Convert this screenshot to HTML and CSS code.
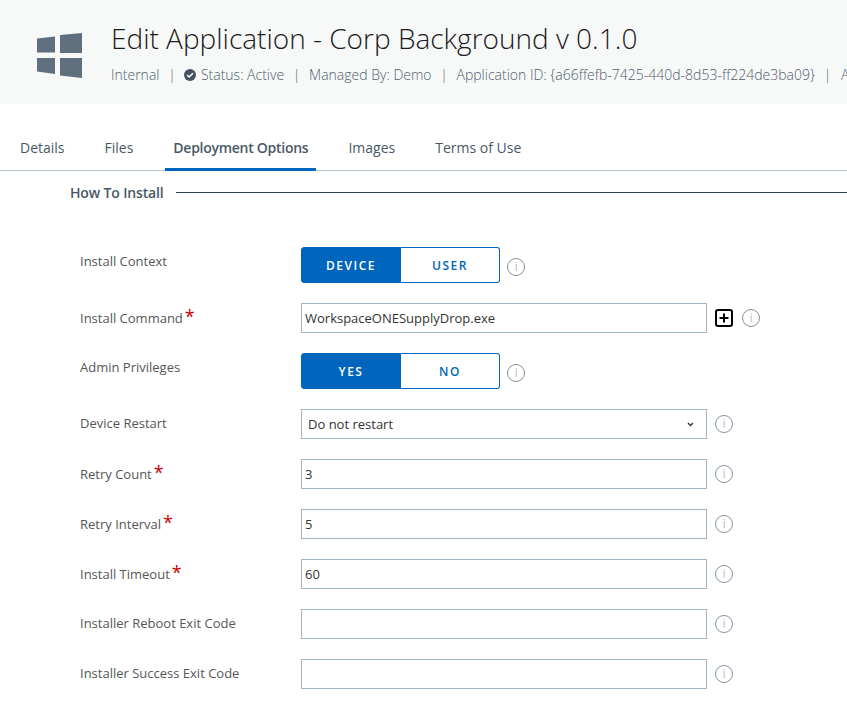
FILE: index.html
```html
<!DOCTYPE html>
<html lang="en">
<head>
<meta charset="UTF-8" />
<meta name="viewport" content="width=device-width, initial-scale=1.0" />
<title>Edit Application</title>
<link rel="stylesheet" href="styles.css">
</head>
<body>

<header class="app-header">
  <svg class="os-icon" width="46" height="46" viewBox="0 0 46 46">
    <polygon fill="#5f6f7e" points="0,5.5 18,3.5 18,19.5 0,19.5" />
    <polygon fill="#5f6f7e" points="23,2 45,0 45,20 23,20" />
    <polygon fill="#5f6f7e" points="0,25 18,25 18,41 0,38.5" />
    <polygon fill="#5f6f7e" points="23,25 45,25 45,45 23,42.5" />
  </svg>
  <div class="app-info">
    <h1>Edit Application - Corp Background v 0.1.0</h1>
    <div class="app-meta">
      <span>Internal</span>
      <span class="sep">|</span>
      <svg class="check" width="12" height="12" viewBox="0 0 12 12">
        <circle cx="6" cy="6" r="6" fill="#46525e" />
        <path d="M3.2 6.1 5.2 8 8.9 4.2" fill="none" stroke="#fff" stroke-width="1.6" />
      </svg>
      <span>Status: Active</span>
      <span class="sep">|</span>
      <span>Managed By: Demo</span>
      <span class="sep">|</span>
      <span>Application ID: {a66ffefb-7425-440d-8d53-ff224de3ba09}</span>
      <span class="sep">|</span>
      <span class="last">A</span>
    </div>
  </div>
</header>

<nav class="tabs">
  <a class="tab">Details</a>
  <a class="tab">Files</a>
  <a class="tab active">Deployment Options</a>
  <a class="tab">Images</a>
  <a class="tab">Terms of Use</a>
</nav>

<div class="section-title">
  <span>How To Install</span>
  <div class="section-line"></div>
</div>

<form class="form-grid">
  <label class="lbl lbl-toggle">Install Context</label>
  <div class="field">
    <div class="toggle">
      <button type="button" class="on">DEVICE</button>
      <button type="button">USER</button>
    </div>
    <span class="info">i</span>
  </div>

  <label class="lbl">Install Command<span class="req">*</span></label>
  <div class="field">
    <input type="text" value="WorkspaceONESupplyDrop.exe" />
    <svg class="plus" width="18" height="18" viewBox="0 0 18 18">
      <rect x="1" y="1" width="16" height="16" rx="2" fill="#fff" stroke="#000" stroke-width="2" />
      <path d="M9 4.5v9M4.5 9h9" stroke="#000" stroke-width="2" />
    </svg>
    <span class="info">i</span>
  </div>

  <label class="lbl lbl-toggle">Admin Privileges</label>
  <div class="field">
    <div class="toggle">
      <button type="button" class="on">YES</button>
      <button type="button">NO</button>
    </div>
    <span class="info">i</span>
  </div>

  <label class="lbl lbl-plain">Device Restart</label>
  <div class="field">
    <div class="select">
      <span>Do not restart</span>
      <svg width="7" height="5" viewBox="0 0 7 5"><path d="M1 1 3.5 3.5 6 1" fill="none" stroke="#333" stroke-width="1.4" /></svg>
    </div>
    <span class="info">i</span>
  </div>

  <label class="lbl">Retry Count<span class="req">*</span></label>
  <div class="field">
    <input type="text" value="3" />
    <span class="info">i</span>
  </div>

  <label class="lbl">Retry Interval<span class="req">*</span></label>
  <div class="field">
    <input type="text" value="5" />
    <span class="info">i</span>
  </div>

  <label class="lbl">Install Timeout<span class="req">*</span></label>
  <div class="field">
    <input type="text" value="60" />
    <span class="info">i</span>
  </div>

  <label class="lbl lbl-plain">Installer Reboot Exit Code</label>
  <div class="field">
    <input type="text" />
    <span class="info">i</span>
  </div>

  <label class="lbl lbl-plain">Installer Success Exit Code</label>
  <div class="field">
    <input type="text" />
    <span class="info">i</span>
  </div>
</form>

</body>
</html>
```

FILE: styles.css
```css
html, body {
  overflow: hidden;
}
body {
  margin: 0;
  height: 724px;
  background: #fff;
  font-family: "Open Sans", sans-serif;
  color: #565656;
}
.app-header {
  height: 104px;
  background: #f7f9f9;
  display: flex;
  padding-left: 37px;
  overflow: hidden;
}
.os-icon {
  margin-top: 33px;
  flex: none;
}
.app-info {
  margin-left: 28px;
  white-space: nowrap;
}
h1 {
  margin: 19px 0 0;
  font-size: 28px;
  line-height: 38px;
  font-weight: 300;
  color: #1b1b1b;
}
.app-meta {
  display: flex;
  align-items: center;
  margin-top: 8px;
  font-size: 14px;
  line-height: 19px;
  font-weight: 300;
  color: #4f5d69;
}
.sep {
  margin: 0 8.7px;
}
.check {
  margin-right: 4.5px;
}
.last {
  margin-left: 1px;
}
.tabs {
  margin-top: 28px;
  height: 38px;
  padding-left: 12px;
  display: flex;
  gap: 24px;
  border-bottom: 1px solid #b9c7d4;
}
.tab {
  padding: 6px 8px 0;
  font-size: 14px;
  line-height: 19px;
  color: #4a5866;
}
.tab.active {
  font-weight: 600;
  letter-spacing: -0.27px;
  border-bottom: 3px solid #0065bd;
  margin-bottom: -1px;
}
.section-title {
  margin: 12px 0 0 70px;
  display: flex;
  align-items: center;
  font-size: 14px;
  line-height: 19px;
  font-weight: 600;
  letter-spacing: -0.15px;
  color: #4a5866;
}
.section-line {
  flex: 1;
  height: 1px;
  margin-left: 12px;
  background: #2c3e50;
}
.form-grid {
  margin: 45px 0 0 80px;
  display: grid;
  grid-template-columns: 221px 1fr;
  row-gap: 20px;
}
.lbl {
  align-self: center;
  font-size: 13px;
  line-height: 18px;
  color: #565656;
}
.lbl-toggle {
  align-self: start;
  padding-top: 5px;
}
.lbl-plain {
  margin-top: -2px;
}
.req {
  color: #c90000;
  font-size: 18px;
  line-height: 10px;
  margin-left: 2px;
}
.field {
  display: flex;
  align-items: center;
}
input, .select {
  width: 406px;
  height: 30px;
  box-sizing: border-box;
  border: 1px solid #a3b5c3;
  padding: 0 3px;
  font-family: "Open Sans", sans-serif;
  font-size: 13px;
  color: #333;
  background: #fff;
}
.select {
  display: flex;
  align-items: center;
  justify-content: space-between;
  padding: 0 12px 0 6px;
}
.toggle {
  display: flex;
  width: 199px;
  height: 36px;
}
.toggle button {
  flex: 1;
  border: 1px solid #0065bd;
  background: #fff;
  color: #0065bd;
  font-family: "Open Sans", sans-serif;
  font-size: 12px;
  font-weight: 600;
  letter-spacing: 1.5px;
  padding: 0;
}
.toggle button:first-child {
  border-radius: 3px 0 0 3px;
}
.toggle button:last-child {
  border-left: none;
  border-radius: 0 3px 3px 0;
}
.toggle button.on {
  background: #0065bd;
  color: #fff;
}
.info {
  width: 16px;
  height: 16px;
  margin-left: 8px;
  border: 1px solid #84919e;
  border-radius: 50%;
  text-align: center;
  font-size: 12px;
  font-weight: 300;
  line-height: 16px;
  color: #84919e;
}
.toggle + .info {
  margin: 4px 0 0 7px;
}
.plus {
  margin-left: 8px;
}
.plus + .info {
  margin-left: 9px;
}
```
